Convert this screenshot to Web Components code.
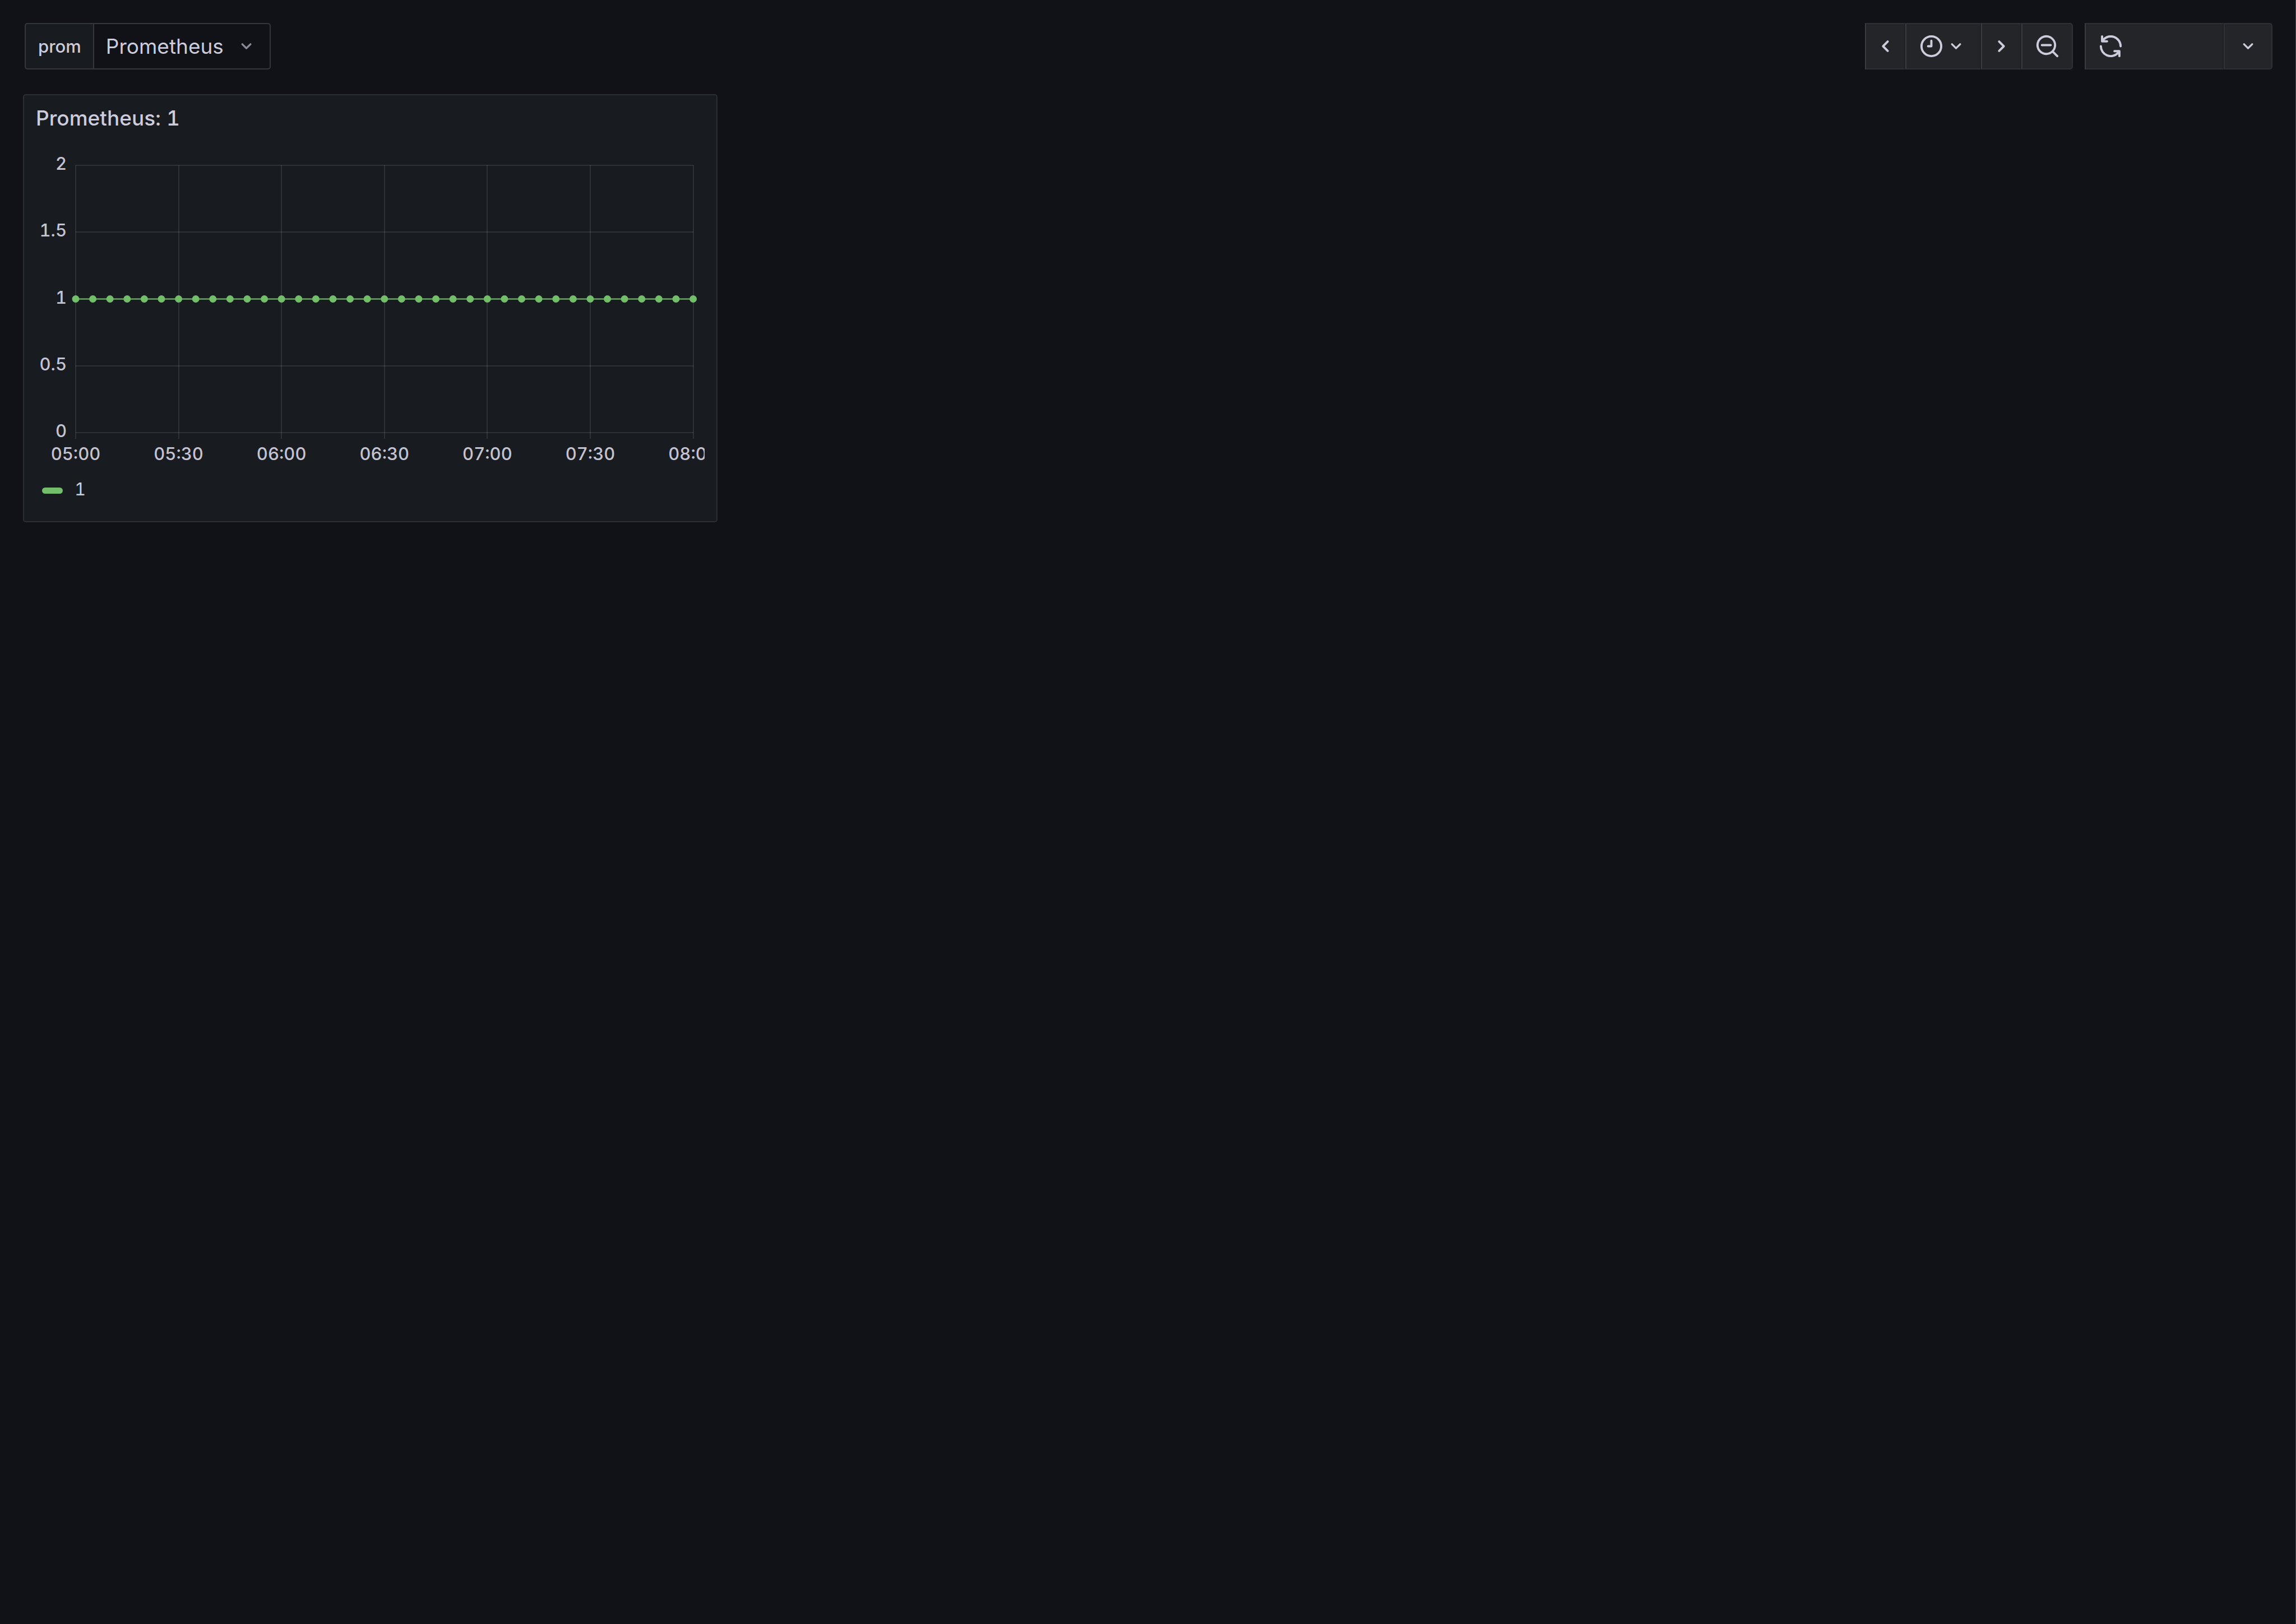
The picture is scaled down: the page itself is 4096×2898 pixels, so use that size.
<!DOCTYPE html>
<html lang="en">
<head>
<meta charset="utf-8">
<title>Dashboard</title>
<style>
  html { background: #111217; }
  body {
    margin: 0;
    min-height: 100vh;
    box-sizing: border-box;
    border-right: 1px solid #4a4a4c;
    background: #111217;
    color: #ccccdc;
    font-family: Inter, "Liberation Sans", sans-serif;
    font-size: 37px;
    font-variant-numeric: tabular-nums;
  }
</style>
</head>
<body>
<dash-page>
  <dash-variable slot="variables" name="prom" value="Prometheus"></dash-variable>
  <dash-time-controls slot="controls"></dash-time-controls>
  <dash-refresh slot="controls"></dash-refresh>
  <dash-panel heading="Prometheus: 1">
    <dash-chart></dash-chart>
    <dash-legend slot="legend">1</dash-legend>
  </dash-panel>
</dash-page>
<script>
const ICONS = {
  'angle-down': 'M17,9.17a1,1,0,0,0-1.41,0L12,12.71,8.46,9.17a1,1,0,0,0-1.41,0,1,1,0,0,0,0,1.42l4.24,4.24a1,1,0,0,0,1.42,0L17,10.59A1,1,0,0,0,17,9.17Z',
  'angle-left': 'M11.29,12l3.54-3.54a1,1,0,0,0,0-1.41,1,1,0,0,0-1.42,0L9.17,11.29a1,1,0,0,0,0,1.42L13.41,17a1,1,0,0,0,.71.29,1,1,0,0,0,.71-.29,1,1,0,0,0,0-1.41Z',
  'angle-right': 'M14.83,11.29,10.59,7.05a1,1,0,0,0-1.42,0,1,1,0,0,0,0,1.41L12.71,12,9.17,15.54a1,1,0,0,0,0,1.41,1,1,0,0,0,.71.29,1,1,0,0,0,.71-.29l4.24-4.24A1,1,0,0,0,14.83,11.29Z',
  'clock': 'M12,2A10,10,0,1,0,22,12,10,10,0,0,0,12,2Zm0,18a8,8,0,1,1,8-8A8,8,0,0,1,12,20ZM12,6a1,1,0,0,0-1,1v4H9a1,1,0,0,0,0,2h3a1,1,0,0,0,1-1V7A1,1,0,0,0,12,6Z',
  'search-minus': 'M21.71,20.29,18,16.61A9,9,0,1,0,16.61,18l3.68,3.68a1,1,0,0,0,1.42,0A1,1,0,0,0,21.71,20.29ZM11,18a7,7,0,1,1,7-7A7,7,0,0,1,11,18Zm4-8H7a1,1,0,0,0,0,2h8a1,1,0,0,0,0-2Z',
  'sync': 'M19.91,15.51H15.38a1,1,0,0,0,0,2h2.4A8,8,0,0,1,4,12a1,1,0,0,0-2,0,10,10,0,0,0,16.88,7.23V21a1,1,0,0,0,2,0V16.5A1,1,0,0,0,19.91,15.51ZM12,2A10,10,0,0,0,5.12,4.77V3a1,1,0,0,0-2,0V7.5a1,1,0,0,0,1,1h4.5a1,1,0,0,0,0-2H6.22A8,8,0,0,1,20,12a1,1,0,0,0,2,0A10,10,0,0,0,12,2Z'
};

function define(name, render) {
  customElements.define(name, class extends HTMLElement {
    connectedCallback() {
      if (this.shadowRoot) return;
      this.attachShadow({ mode: 'open' }).innerHTML = render(this);
    }
  });
}

define('dash-icon', el => `
  <style>
    :host { display: block; flex: none; width: 47px; height: 47px; }
    :host([small]) { width: 41px; height: 41px; }
    svg { display: block; width: 100%; height: 100%; fill: currentColor; }
  </style>
  <svg viewBox="0 0 24 24" aria-hidden="true"><path d="${ICONS[el.getAttribute('name')]}"/></svg>`);

define('dash-page', () => `
  <style>
    :host { display: flex; flex-direction: column; gap: 44px; padding: 41px; }
    header { display: flex; justify-content: space-between; padding-left: 3px; }
    .controls { display: flex; gap: 21px; }
    main { display: grid; grid-template-columns: 25fr 56fr; }
  </style>
  <header>
    <slot name="variables"></slot>
    <div class="controls"><slot name="controls"></slot></div>
  </header>
  <main><slot></slot></main>`);

define('dash-variable', el => `
  <style>
    :host { display: flex; height: 83px; }
    label {
      display: flex; align-items: center; box-sizing: border-box;
      padding: 0 21px 0 22px;
      border: 2px solid #34363b; border-right: 0; border-radius: 5px 0 0 5px;
      background: #181b1f; font-size: 31px; font-weight: 500;
    }
    .field { display: grid; align-items: center; justify-items: end; }
    select, dash-icon { grid-area: 1 / 1; }
    select {
      appearance: none; box-sizing: border-box; height: 83px; margin: 0;
      padding: 0 81px 0 21px;
      border: 2px solid #34363b; border-radius: 0 5px 5px 0;
      background: #111217; color: inherit; font: inherit;
    }
    dash-icon { margin-right: 23px; color: #8b8b97; pointer-events: none; }
  </style>
  <label for="value">${el.getAttribute('name')}</label>
  <div class="field">
    <select id="value"><option>${el.getAttribute('value')}</option></select>
    <dash-icon small name="angle-down"></dash-icon>
  </div>`);

const BUTTONS = `
  :host { display: flex; height: 83px; }
  button {
    display: flex; align-items: center; justify-content: center; box-sizing: border-box;
    width: 72px; height: 83px; margin: 0; padding: 0;
    border: 2px solid #2f3035; background: #242529; color: inherit; font: inherit;
  }
  button:not(:last-child) { border-right-color: #1f2024; }
  button:not(:first-child) { border-left-color: #3a3b40; }
  button:first-child { border-radius: 5px 0 0 5px; }
  button:last-child { border-radius: 0 5px 5px 0; }`;

define('dash-time-controls', () => `
  <style>${BUTTONS}
    .range { width: 135px; justify-content: flex-start; padding-left: 21px; }
    .zoom { width: 92px; }
  </style>
  <button aria-label="Move time range backwards"><dash-icon name="angle-left"></dash-icon></button>
  <button class="range" aria-label="Time range"><dash-icon name="clock"></dash-icon><dash-icon small name="angle-down"></dash-icon></button>
  <button aria-label="Move time range forwards"><dash-icon name="angle-right"></dash-icon></button>
  <button class="zoom" aria-label="Zoom out time range"><dash-icon name="search-minus"></dash-icon></button>`);

define('dash-refresh', () => `
  <style>${BUTTONS}
    .run { width: 248px; justify-content: flex-start; padding-left: 21px; }
    .every { width: 87px; }
    button.every { border-left-color: #2f3035; }
  </style>
  <button class="run" aria-label="Refresh dashboard"><dash-icon name="sync"></dash-icon></button>
  <button class="every" aria-label="Auto refresh interval"><dash-icon small name="angle-down"></dash-icon></button>`);

define('dash-panel', el => `
  <style>
    :host {
      display: flex; flex-direction: column; box-sizing: border-box; overflow: hidden;
      border: 2px solid #2c2e33; border-radius: 5px; background: #181b1f;
    }
    h2 { margin: 0; padding: 0 21px; font-size: 37px; font-weight: 500; line-height: 82px; }
    .body { padding: 0 21px; }
    .legend { padding: 23px 32px 37px; }
  </style>
  <h2>${el.getAttribute('heading')}</h2>
  <div class="body"><slot></slot></div>
  <div class="legend"><slot name="legend"></slot></div>`);

define('dash-legend', () => `
  <style>
    :host { display: flex; align-items: center; gap: 21px; font-size: 31px; line-height: 40px; }
    i { width: 37px; height: 11px; margin-top: 4px; border-radius: 6px; background: #73bf69; }
  </style>
  <i></i><span><slot></slot></span>`);

define('dash-chart', () => {
  const yTicks = ['2', '1.5', '1', '0.5', '0'];
  const xTicks = ['05:00', '05:30', '06:00', '06:30', '07:00', '07:30', '08:00'];
  const share = (i, n) => (100 * i / n).toFixed(3) + '%';
  const rows = yTicks.map((t, i) => `<line x1="0" x2="100%" y1="${share(i, 4)}" y2="${share(i, 4)}"/>`).join('');
  const cols = xTicks.map((t, i) => `<line x1="${share(i, 6)}" x2="${share(i, 6)}" y1="0" y2="100%"/>`).join('');
  const points = Array.from({ length: 37 }, (_, i) => `<circle cx="${share(i, 36)}" cy="50%" r="6.5"/>`).join('');
  return `
  <style>
    :host {
      --grid: rgba(204, 204, 220, .13);
      display: grid; grid-template-columns: 55px 1fr; column-gap: 16px;
      padding: 20px 20px 0 0; overflow: hidden;
      font-size: 31px; font-weight: 500; line-height: 40px; color: #c3c3d2;
    }
    .y { display: flex; flex-direction: column; justify-content: space-between; height: 517px; text-align: right; }
    .plot { height: 477px; padding-top: 23px; }
    svg { display: block; width: 100%; height: 477px; overflow: visible; }
    .grid { shape-rendering: crispEdges; }
    .grid line { stroke: var(--grid); stroke-width: 2; }
    .series { fill: #73bf69; }
    .series line { stroke: #73bf69; stroke-width: 2; }
    .ticks, .x { grid-column: 2; display: flex; justify-content: space-between; }
    .ticks { height: 11px; margin-top: -17px; }
    .ticks b { width: 2px; margin: 0 -1px; background: var(--grid); }
    .x { margin-top: 1px; }
    .x span { display: flex; justify-content: center; width: 0; }
  </style>
  <div class="y">${yTicks.map(t => `<span>${t}</span>`).join('')}</div>
  <div class="plot">
    <svg role="img" aria-label="Series 1 over time">
      <g class="grid">${rows}${cols}</g>
      <g class="series"><line x1="0" x2="100%" y1="50%" y2="50%"/>${points}</g>
    </svg>
  </div>
  <div class="ticks">${xTicks.map(() => '<b></b>').join('')}</div>
  <div class="x">${xTicks.map(t => `<span>${t}</span>`).join('')}</div>`;
});
</script>
</body>
</html>
